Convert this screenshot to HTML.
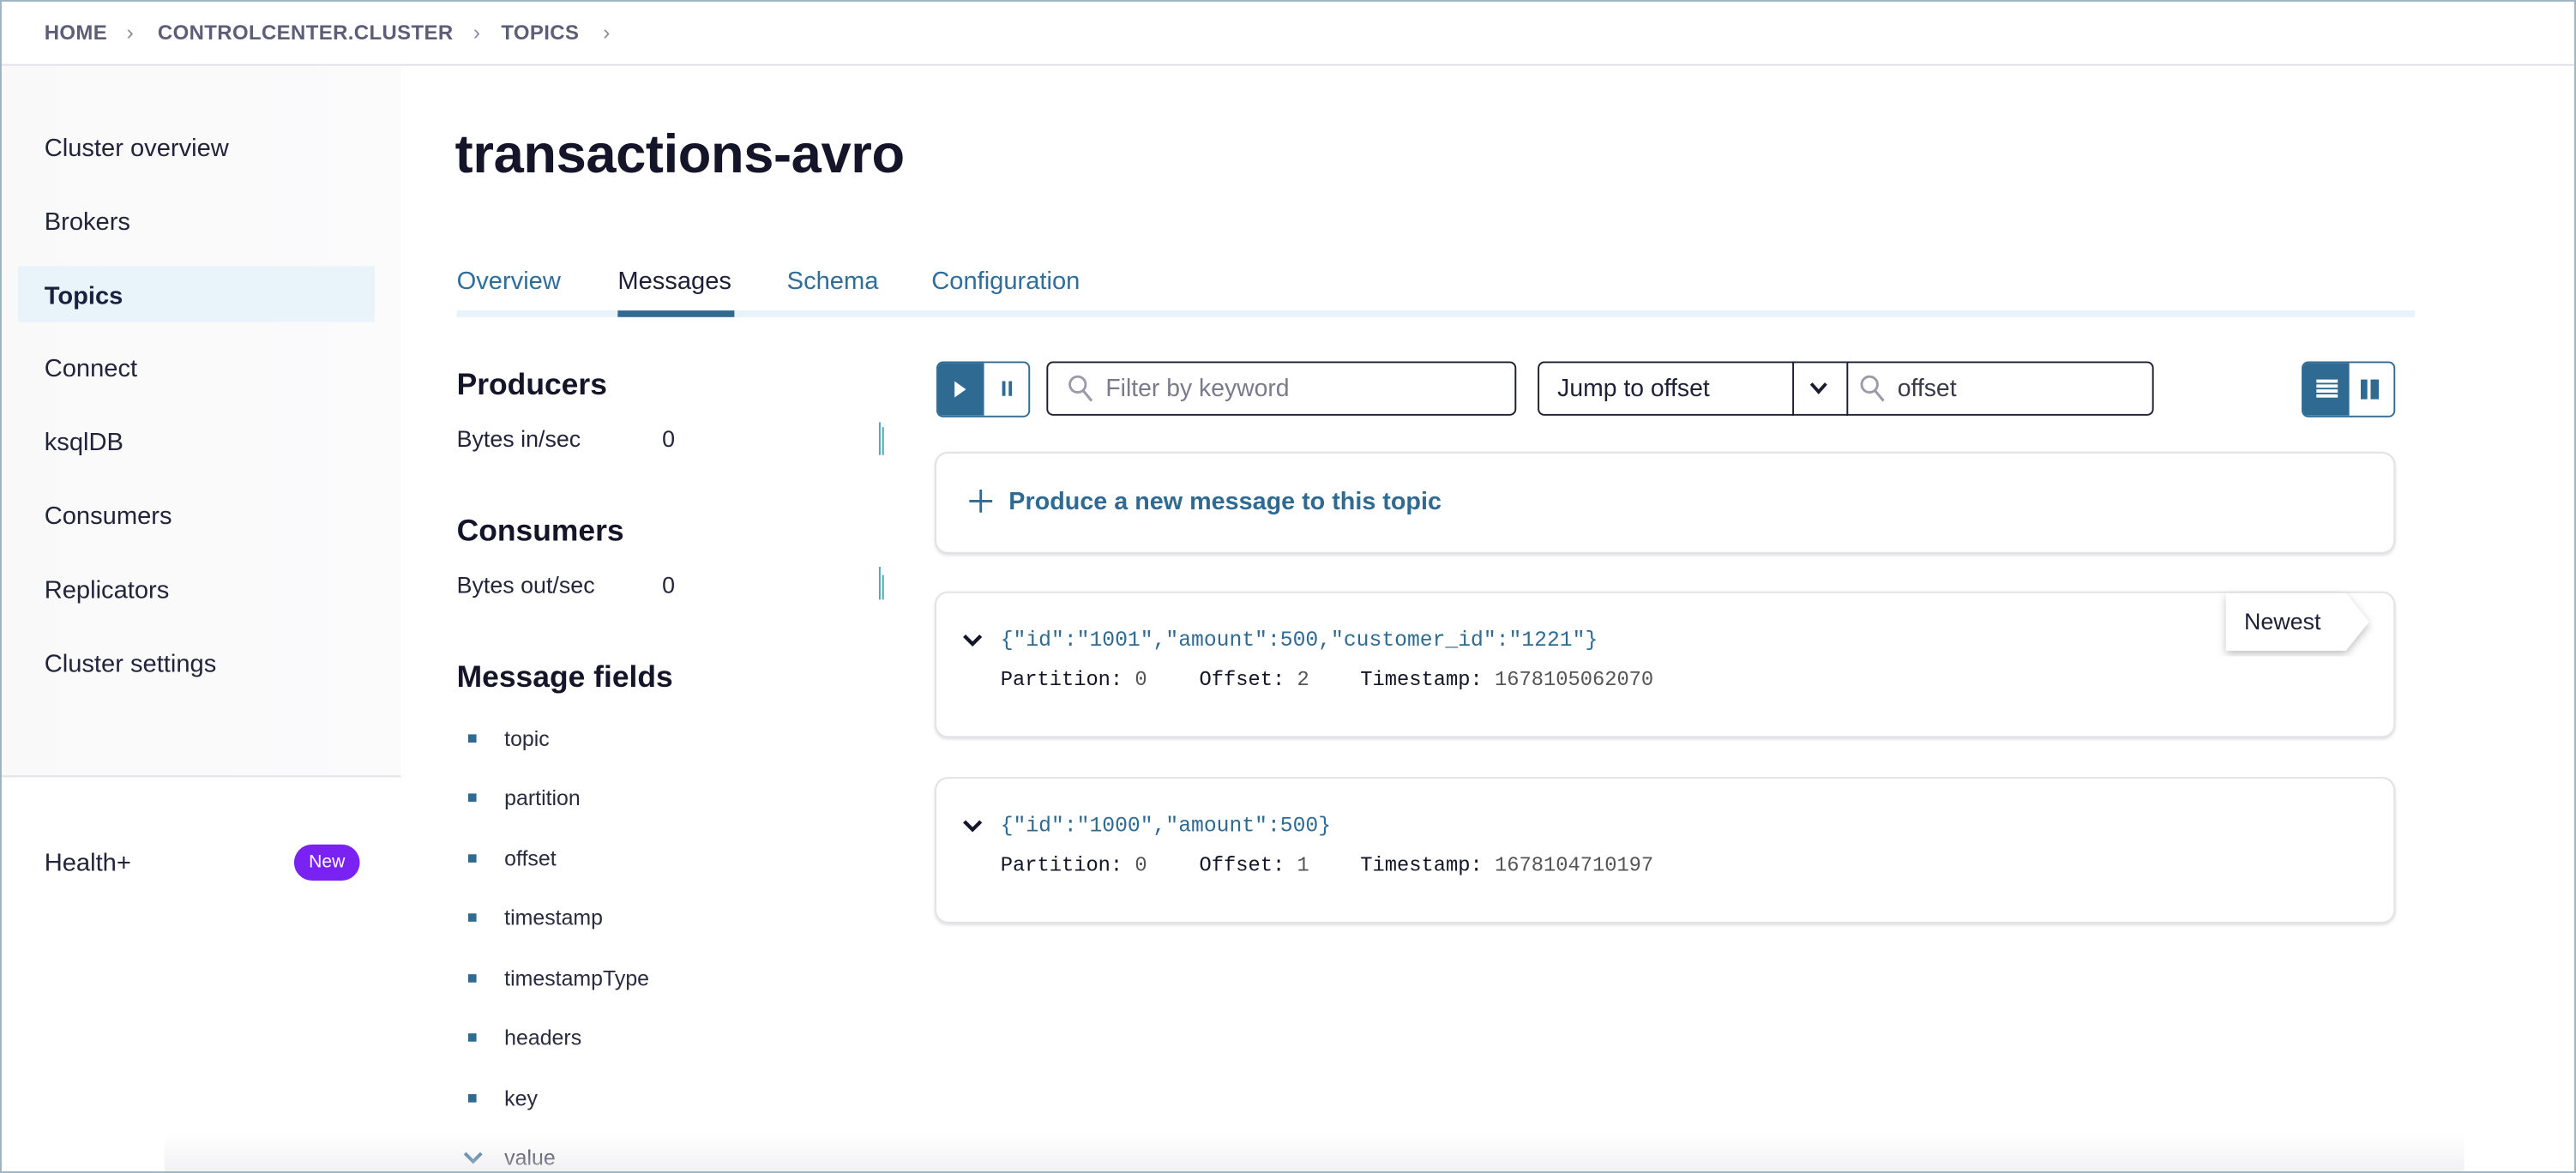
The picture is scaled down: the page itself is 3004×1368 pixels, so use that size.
<!DOCTYPE html>
<html><head><meta charset="utf-8"><style>
html,body{margin:0;padding:0;background:#fff;overflow:hidden;width:3004px;height:1368px}
#w{position:absolute;left:0;top:0;width:1568px;height:714px;transform:scale(1.9158,1.916);transform-origin:0 0;font-family:"Liberation Sans",sans-serif;color:#1f1f36;overflow:hidden}
.a{position:absolute;white-space:nowrap}
.frame{position:absolute;left:0;top:0;width:1566px;height:712px;border:1px solid #9fb3c1}
.bc{font-size:12.5px;font-weight:bold;color:#5d5d78;letter-spacing:.2px;top:13px}
.chev{color:#8a8aa0;font-size:13px;top:12px}
.nav{left:27px;font-size:15.2px;color:#23233a}
.tab{top:163px;font-size:15.2px;color:#2f6e9a}
.h2{left:278px;font-size:18.5px;font-weight:bold;color:#15152a}
.lbl{font-size:14px;color:#23233a}
.fld{left:307px;font-size:13px;color:#2a2a40}
.bul{left:285px;width:5px;height:5px;background:#2e6a92}
.card{position:absolute;left:569px;width:887px;border:1px solid #e2e2e6;border-radius:8px;background:#fff;box-shadow:0 1px 2px rgba(0,0,0,.12)}
.mono{font-family:"Liberation Mono",monospace;font-size:12.4px}
</style></head><body><div id="w">
<div class="a" style="left:0;top:40px;width:244px;height:433px;background:linear-gradient(90deg,#f9f9fa,#fbfbfc)"></div>
<div class="a" style="left:0;top:39px;width:1568px;height:1px;background:#e1e1e8"></div>
<div class="a bc" style="left:27px">HOME</div><div class="a chev" style="left:77px">›</div>
<div class="a bc" style="left:96px">CONTROLCENTER.CLUSTER</div><div class="a chev" style="left:288px">›</div>
<div class="a bc" style="left:305px">TOPICS</div><div class="a chev" style="left:367px">›</div>

<div class="a nav" style="top:82px">Cluster overview</div>
<div class="a nav" style="top:127px">Brokers</div>
<div class="a" style="left:11px;top:162px;width:217px;height:34px;background:#e8f3fa"></div>
<div class="a nav" style="top:172px;font-weight:bold;color:#1a2140">Topics</div>
<div class="a nav" style="top:216px">Connect</div>
<div class="a nav" style="top:261px">ksqlDB</div>
<div class="a nav" style="top:306px">Consumers</div>
<div class="a nav" style="top:351px">Replicators</div>
<div class="a nav" style="top:396px">Cluster settings</div>
<div class="a" style="left:0;top:472px;width:244px;height:1px;background:#e1e1e8"></div>
<div class="a nav" style="top:517px">Health+</div>
<div class="a" style="left:179px;top:514px;width:40px;height:22px;border-radius:11px;background:#7a22f2;color:#fff;font-size:11px;text-align:center;line-height:22px">New</div>

<div class="a" style="left:277px;top:75px;font-size:33px;font-weight:bold;color:#15152a;letter-spacing:-.2px">transactions-avro</div>
<div class="a tab" style="left:278px">Overview</div>
<div class="a tab" style="left:376px;color:#1f1f3a">Messages</div>
<div class="a tab" style="left:479px">Schema</div>
<div class="a tab" style="left:567px">Configuration</div>
<div class="a" style="left:278px;top:189px;width:1192px;height:4px;background:#e7f2f9"></div>
<div class="a" style="left:376px;top:189px;width:71px;height:4px;background:#2e6a92"></div>

<div class="a h2" style="top:223px">Producers</div>
<div class="a lbl" style="left:278px;top:259px">Bytes in/sec</div><div class="a lbl" style="left:403px;top:259px">0</div>
<div class="a" style="left:535px;top:257px;width:1px;height:20px;background:#4aa8b8"></div><div class="a" style="left:537px;top:260px;width:1px;height:17px;background:#4aa8b8"></div>
<div class="a h2" style="top:312px">Consumers</div>
<div class="a lbl" style="left:278px;top:348px">Bytes out/sec</div><div class="a lbl" style="left:403px;top:348px">0</div>
<div class="a" style="left:535px;top:345px;width:1px;height:20px;background:#4aa8b8"></div><div class="a" style="left:537px;top:350px;width:1px;height:15px;background:#4aa8b8"></div>
<div class="a h2" style="top:401px">Message fields</div>
<div class="a bul" style="top:447px"></div><div class="a fld" style="top:442px">topic</div>
<div class="a bul" style="top:483px"></div><div class="a fld" style="top:478px">partition</div>
<div class="a bul" style="top:520px"></div><div class="a fld" style="top:515px">offset</div>
<div class="a bul" style="top:556px"></div><div class="a fld" style="top:551px">timestamp</div>
<div class="a bul" style="top:593px"></div><div class="a fld" style="top:588px">timestampType</div>
<div class="a bul" style="top:629px"></div><div class="a fld" style="top:624px">headers</div>
<div class="a bul" style="top:666px"></div><div class="a fld" style="top:661px">key</div>
<svg class="a" style="left:281px;top:700px" width="14" height="10"><path d="M2 2l5 5 5-5" stroke="#2e6a92" stroke-width="2" fill="none"/></svg>
<div class="a fld" style="top:697px">value</div>

<!-- controls -->
<div class="a" style="left:570px;top:220px;width:55px;height:32px;border:1px solid #2e6a92;border-radius:4px;overflow:hidden;background:#fff">
<div style="position:absolute;left:0;top:0;width:28px;height:32px;background:#2e6a92"></div>
<svg style="position:absolute;left:10px;top:11px" width="8" height="10"><path d="M0 0L7 5L0 10Z" fill="#fff"/></svg>
<div style="position:absolute;left:39px;top:11px;width:2px;height:9px;background:#2e6a92"></div><div style="position:absolute;left:43px;top:11px;width:2px;height:9px;background:#2e6a92"></div>
</div>
<div class="a" style="left:637px;top:220px;width:284px;height:31px;border:1.5px solid #1c1c30;border-radius:4px"></div>
<svg class="a" style="left:650px;top:228px" width="16" height="17"><circle cx="6" cy="6" r="4.8" stroke="#9a9aa8" stroke-width="1.5" fill="none"/><path d="M9.5 10l5 6" stroke="#9a9aa8" stroke-width="1.6"/></svg>
<div class="a" style="left:673px;top:229px;font-size:14.8px;color:#7a7a8a">Filter by keyword</div>
<div class="a" style="left:936px;top:220px;width:373px;height:31px;border:1.5px solid #1c1c30;border-radius:4px"></div>
<div class="a" style="left:1091px;top:220px;width:1px;height:33px;background:#1c1c30"></div>
<div class="a" style="left:1124px;top:220px;width:1px;height:33px;background:#1c1c30"></div>
<div class="a" style="left:948px;top:229px;font-size:14.8px;color:#1f1f36">Jump to offset</div>
<svg class="a" style="left:1101px;top:232px" width="12" height="9"><path d="M1.5 1.5l4.5 5 4.5-5" stroke="#1c1c30" stroke-width="2" fill="none"/></svg>
<svg class="a" style="left:1132px;top:228px" width="16" height="17"><circle cx="6" cy="6" r="4.8" stroke="#9a9aa8" stroke-width="1.5" fill="none"/><path d="M9.5 10l5 6" stroke="#9a9aa8" stroke-width="1.6"/></svg>
<div class="a" style="left:1155px;top:229px;font-size:14.8px;color:#3a3a4a">offset</div>
<div class="a" style="left:1401px;top:220px;width:55px;height:32px;border:1px solid #2e6a92;border-radius:4px;overflow:hidden;background:#fff">
<div style="position:absolute;left:0;top:0;width:28px;height:32px;background:#2e6a92"></div>
<div style="position:absolute;left:8px;top:10px;width:13px;height:2px;background:#fff;box-shadow:0 3px 0 #fff,0 6px 0 #fff,0 9px 0 #fff"></div>
<div style="position:absolute;left:35px;top:10px;width:4px;height:12px;background:#2e6a92"></div><div style="position:absolute;left:41px;top:10px;width:5px;height:12px;background:#2e6a92"></div>
</div>

<div class="card" style="top:275px;height:60px"></div>
<svg class="a" style="left:589px;top:297px" width="16" height="16"><path d="M8 1v14M1 8h14" stroke="#2e6a92" stroke-width="1.5"/></svg>
<div class="a" style="left:614px;top:297px;font-size:15px;font-weight:bold;color:#2e6a92">Produce a new message to this topic</div>

<div class="card" style="top:360px;height:87px"></div>
<svg class="a" style="left:585px;top:385px" width="14" height="10"><path d="M2 2l5 5 5-5" stroke="#15152a" stroke-width="2.2" fill="none"/></svg>
<div class="a mono" style="left:609px;top:382px;color:#2e6a92;font-size:12.9px">{"id":"1001","amount":500,"customer_id":"1221"}</div>
<div class="a mono" style="left:609px;top:407px;color:#15152a">Partition: <span style="color:#555">0</span></div>
<div class="a mono" style="left:730px;top:407px;color:#15152a">Offset: <span style="color:#555">2</span></div>
<div class="a mono" style="left:828px;top:407px;color:#15152a">Timestamp: <span style="color:#555">1678105062070</span></div>
<svg class="a" style="left:1350px;top:358px;overflow:visible" width="100" height="45"><defs><filter id="s"><feDropShadow dx="0" dy="2" stdDeviation="2.5" flood-opacity=".25"/></filter></defs><path d="M5 3H78L92 20.5L78 38H5Z" fill="#fff" filter="url(#s)"/></svg>
<div class="a" style="left:1366px;top:370px;font-size:14px;color:#1f1f36">Newest</div>

<div class="card" style="top:473px;height:87px"></div>
<svg class="a" style="left:585px;top:498px" width="14" height="10"><path d="M2 2l5 5 5-5" stroke="#15152a" stroke-width="2.2" fill="none"/></svg>
<div class="a mono" style="left:609px;top:495px;color:#2e6a92;font-size:12.9px">{"id":"1000","amount":500}</div>
<div class="a mono" style="left:609px;top:520px;color:#15152a">Partition: <span style="color:#555">0</span></div>
<div class="a mono" style="left:730px;top:520px;color:#15152a">Offset: <span style="color:#555">1</span></div>
<div class="a mono" style="left:828px;top:520px;color:#15152a">Timestamp: <span style="color:#555">1678104710197</span></div>

<div class="a" style="left:100px;top:690px;width:1400px;height:23px;background:linear-gradient(180deg,rgba(240,240,242,0),rgba(232,232,236,.6))"></div>
<div class="frame"></div>
</div></body></html>
